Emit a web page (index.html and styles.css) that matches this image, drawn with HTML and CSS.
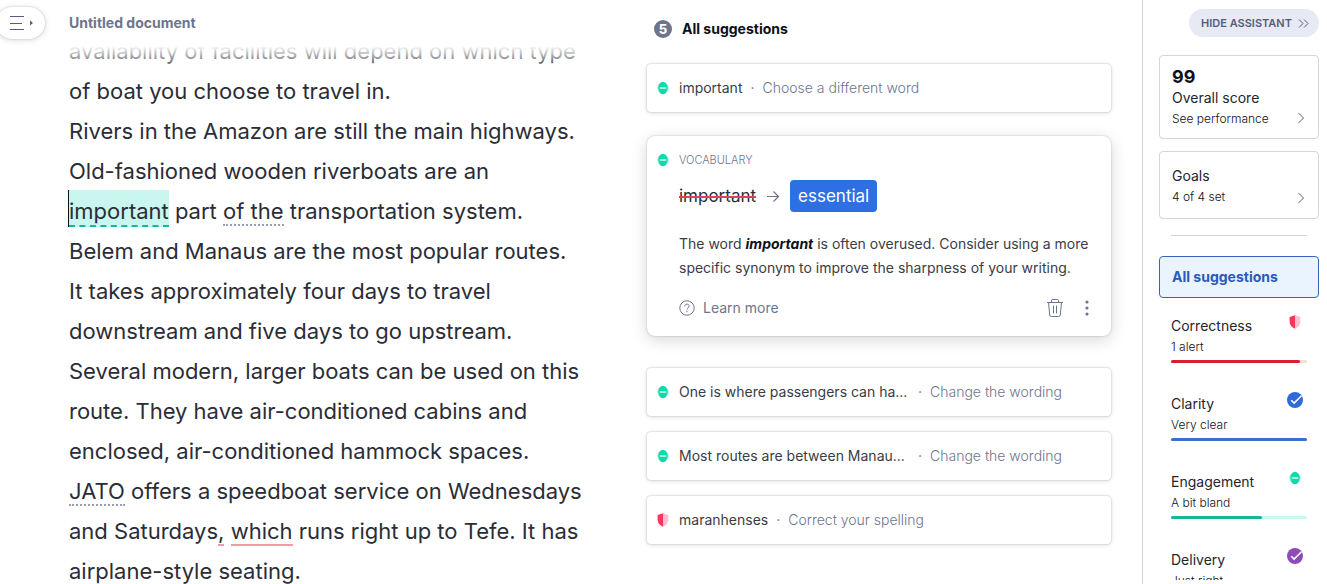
FILE: index.html
```html
<!DOCTYPE html>
<html lang="en">
<head>
  <meta charset="UTF-8" />
  <meta name="viewport" content="width=device-width, initial-scale=1.0"/>
  <title>Untitled document</title>
  <link rel="stylesheet" href="styles.css">
</head>
<body>
  <!-- icons shared by the cards and the sidebar -->
  <svg class="sprite" aria-hidden="true">
    <symbol id="icon-engage" viewBox="0 0 12 14">
      <ellipse cx="6" cy="7" rx="6" ry="5" fill="#b5f5e6"/>
      <ellipse cx="6" cy="7" rx="4.7" ry="6.3" fill="#0edbab"/>
      <path d="M2 7l1.600-1h4.800l1.600 1-1.600 1H3.600z" fill="#a5f3df"/>
    </symbol>
    <symbol id="icon-shield" viewBox="0 0 12 14">
      <path d="M6 .3 L.6 2v4.500C.6 10 2.800 12.500 6 13.700z" fill="#f8365e"/>
      <path d="M6 .3 L11.300 2v4.500c0 3.500-2.100 6-5.300 7.200z" fill="#fcc0cc"/>
    </symbol>
    <symbol id="icon-check" viewBox="0 0 16 16">
      <circle cx="8" cy="8" r="8" fill="currentColor"/>
      <path d="M4.300 8.200l2.800 2.900 7.400-7.300" fill="none" stroke="#fff" stroke-width="1.600"/>
    </symbol>
    <symbol id="icon-chevron" viewBox="0 0 8 12">
      <path d="M1.500 1l5 5-5 5" fill="none" stroke="currentColor"/>
    </symbol>
  </svg>

  <div class="app">
    <main class="editor">
      <button class="menu-btn" aria-label="Open menu">
        <svg width="32" height="16" viewBox="0 0 32 16">
          <path d="M1 1.500h14M1 8.500h12M1 14.500h14" stroke="#585d77" fill="none"/>
          <path d="M21 5.500l3 2.500-3 2.500z" fill="#585d77"/>
        </svg>
      </button>
      <header class="doc-header">
        <h1>Untitled document</h1>
      </header>
      <div class="doc-text">
        <p>availability of facilities will depend on which type of boat you choose to travel in.</p>
        <p>Rivers in the Amazon are still the main highways. Old-fashioned wooden riverboats are an <span class="active-word">important</span> part <span class="hint">of the</span> transportation system. Belem and Manaus are the most popular routes. It takes approximately four days to travel downstream and five days to go upstream.</p>
        <p>Several modern, larger boats can be used on this route. They have air-conditioned cabins and enclosed, air-conditioned hammock spaces.</p>
        <p><span class="hint">JATO</span> offers a speedboat service on Wednesdays and Saturdays<span class="error">,</span> <span class="error">which</span> runs right up to Tefe. It has airplane-style seating.</p>
      </div>
    </main>

    <section class="suggestions">
      <h2><span class="count">5</span>All suggestions</h2>

      <button class="card">
        <svg class="mark"><use href="#icon-engage"/></svg>
        <span class="snippet">important</span><span class="dot">·</span><span class="action">Choose a different word</span>
      </button>

      <article class="card-open">
        <div class="category">
          <svg class="mark"><use href="#icon-engage"/></svg>
          <span>VOCABULARY</span>
        </div>
        <div class="replace">
          <del>important</del>
          <svg width="14" height="12" viewBox="0 0 14 12">
            <path d="M1 6.500h11.500M7.500 1.500l5 5-5 5" fill="none" stroke="#6d758d" stroke-width="1.200"/>
          </svg>
          <button class="replacement">essential</button>
        </div>
        <p>The word <b>important</b> is often overused. Consider using a more specific synonym to improve the sharpness of your writing.</p>
        <div class="card-footer">
          <a href="#" class="learn">
            <svg width="16" height="16" viewBox="0 0 16 16" fill="none" stroke="#6d758d">
              <circle cx="8" cy="8" r="7.200"/>
              <path d="M5.800 6.300c0-3 4.500-2.800 4.400-.1 0 1.600-2.200 1.600-2.200 3.300"/>
              <path d="M8 10.900v1.300"/>
            </svg>
            Learn more
          </a>
          <button class="icon-btn" aria-label="Dismiss">
            <svg width="18" height="20" viewBox="0 0 18 20" fill="none" stroke="#6d758d">
              <path d="M1 4.500h16M5.500 4.500v-2q0-1 1-1h5q1 0 1 1v2M2.500 4.500l1.200 12.500q.2 1.500 1.700 1.500h7.200q1.500 0 1.700-1.500l1.200-12.500M7.500 7.500v8M10.500 7.500v8"/>
            </svg>
          </button>
          <button class="icon-btn" aria-label="More options">
            <svg width="4" height="16" viewBox="0 0 4 16" fill="#6d758d">
              <circle cx="2" cy="2" r="1.600"/>
              <circle cx="2" cy="8" r="1.600"/>
              <circle cx="2" cy="14" r="1.600"/>
            </svg>
          </button>
        </div>
      </article>

      <button class="card">
        <svg class="mark"><use href="#icon-engage"/></svg>
        <span class="snippet long">One is where passengers can ha...</span><span class="dot">·</span><span class="action">Change the wording</span>
      </button>
      <button class="card">
        <svg class="mark"><use href="#icon-engage"/></svg>
        <span class="snippet long">Most routes are between Manau...</span><span class="dot">·</span><span class="action">Change the wording</span>
      </button>
      <button class="card">
        <svg class="mark"><use href="#icon-shield"/></svg>
        <span class="snippet">maranhenses</span><span class="dot">·</span><span class="action">Correct your spelling</span>
      </button>
    </section>

    <aside class="sidebar">
      <button class="hide-btn">HIDE ASSISTANT
        <svg width="11" height="9" viewBox="0 0 11 9"><path d="M1 .5l4 4-4 4M6 .5l4 4-4 4" fill="none" stroke="#585d77"/></svg>
      </button>
      <button class="panel">
        <strong>99</strong>
        <span class="title">Overall score</span>
        <span class="sub">See performance</span>
        <svg class="chevron"><use href="#icon-chevron"/></svg>
      </button>
      <button class="panel goals">
        <span class="title">Goals</span>
        <span class="sub">4 of 4 set</span>
        <svg class="chevron"><use href="#icon-chevron"/></svg>
      </button>
      <hr>
      <button class="filter">All suggestions</button>

      <div class="metrics">
        <button class="metric red">
          <span class="title">Correctness</span>
          <span class="sub">1 alert</span>
          <svg class="mark"><use href="#icon-shield"/></svg>
          <span class="bar"><span style="width: 95%"></span></span>
        </button>
        <button class="metric blue">
          <span class="title">Clarity</span>
          <span class="sub">Very clear</span>
          <svg class="check"><use href="#icon-check"/></svg>
          <span class="bar"><span style="width: 100%"></span></span>
        </button>
        <button class="metric green">
          <span class="title">Engagement</span>
          <span class="sub">A bit bland</span>
          <svg class="mark"><use href="#icon-engage"/></svg>
          <span class="bar"><span style="width: 67%"></span></span>
        </button>
        <button class="metric purple">
          <span class="title">Delivery</span>
          <span class="sub">Just right</span>
          <svg class="check"><use href="#icon-check"/></svg>
          <span class="bar"><span style="width: 100%"></span></span>
        </button>
      </div>
    </aside>
  </div>
</body>
</html>
```
FILE: styles.css
```css
* {
  box-sizing: border-box;
}
body {
  margin: 0;
  font-family: Inter, "Liberation Sans", sans-serif;
  font-size: 14px;
  color: #0e101a;
  background: #fff;
}
h1, h2, p {
  margin: 0;
}
button {
  font: inherit;
  color: inherit;
  text-align: left;
  background: none;
  border: none;
  padding: 0;
  cursor: pointer;
}
.sprite {
  display: none;
}
.app {
  display: flex;
  height: 100vh;
  overflow: hidden;
}

/* document */
.editor {
  flex: 1;
  min-width: 0;
  position: relative;
  padding: 0 64px 0 69px;
}
.menu-btn {
  position: absolute;
  left: -4px;
  top: 7px;
  width: 49px;
  height: 32px;
  padding-left: 13px;
  display: flex;
  align-items: center;
  border-radius: 16px;
  background: #fff;
  box-shadow: 0 0 2px rgba(0,0,0,0.2), 0 1px 6px rgba(0,0,0,0.15);
}
.doc-header {
  position: relative;
  height: 46px;
  background: #fff;
}
.doc-header::after {
  content: "";
  position: absolute;
  top: 46px;
  left: 0;
  right: 0;
  height: 24px;
  background: linear-gradient(#fff, rgba(255,255,255,0));
}
.doc-header h1 {
  font-size: 14px;
  font-weight: 700;
  line-height: 46px;
  color: #6d758d;
}
.doc-header, .menu-btn {
  z-index: 1;
}
.doc-text {
  margin-top: -15px;
  font-size: 22px;
  line-height: 40px;
  color: #2b2d36;
}
.active-word {
  padding: 8px 0 1px;
  background: #c9f6ee;
  border-bottom: 2px dashed #15b796;
  box-shadow: -1px 0 #0e101a;
}
.hint {
  border-bottom: 2px dotted #9aa0b2;
}
.error {
  border-bottom: 2px solid #f29aa6;
}

/* suggestion cards */
.suggestions {
  width: 464px;
  margin-right: 31px;
}
.suggestions h2 {
  display: flex;
  align-items: center;
  gap: 10px;
  margin: 19px 0 25px 7px;
  font-size: 14px;
  font-weight: 700;
  line-height: 20px;
}
.count {
  width: 18px;
  height: 18px;
  border-radius: 50%;
  background: #6d758d;
  color: #fff;
  font-size: 13px;
  font-weight: 800;
  line-height: 18px;
  text-align: center;
}
.card {
  display: flex;
  align-items: center;
  width: 100%;
  height: 48px;
  padding: 0 10px;
  margin-bottom: 16px;
  border-radius: 4px;
  background: #fff;
  color: #3a3c46;
  line-height: 20px;
  box-shadow: 0 0 2px rgba(0,0,0,0.25), 0 1px 5px rgba(0,0,0,0.12);
}
.mark {
  flex: none;
  width: 12px;
  height: 14px;
}
.snippet {
  margin-left: 10px;
  white-space: nowrap;
}
.long {
  width: 231px;
}
.dot {
  margin: 0 8px;
}
.dot, .action {
  color: #6d758d;
}
.action {
  font-weight: 300;
}
.card-open {
  margin: 24px 0 32px;
  padding: 14px 16px 16px 32px;
  border-radius: 8px;
  background: #fff;
  box-shadow: 0 0 2px rgba(0,0,0,0.25), 0 4px 16px rgba(0,0,0,0.16);
}
.category {
  display: flex;
  align-items: center;
  gap: 10px;
  margin-left: -22px;
  font-size: 11px;
  font-weight: 300;
  line-height: 20px;
  color: #6d758d;
}
.replace {
  display: flex;
  align-items: center;
  gap: 10px;
  margin: 10px 0 20px;
  font-size: 17px;
}
.replace del {
  color: #2b2d36;
  text-decoration: line-through 2px #e0405e;
}
.replacement {
  height: 32px;
  padding: 0 8px;
  border-radius: 4px;
  background: #2f6fe4;
  color: #fff;
}
.card-open p {
  line-height: 24px;
  color: #3a3c46;
}
.card-open b {
  font-style: italic;
  font-weight: 700;
  color: #0e101a;
}
.card-footer {
  display: flex;
  align-items: center;
  gap: 21px;
  height: 24px;
  margin-top: 16px;
  padding-right: 6px;
}
.learn {
  display: flex;
  align-items: center;
  gap: 8px;
  margin-right: auto;
  color: #6d758d;
  line-height: 20px;
  text-decoration: none;
}
.icon-btn {
  display: flex;
}

/* sidebar */
.sidebar {
  display: flex;
  flex-direction: column;
  width: 185px;
  padding: 9px 8px 4px 16px;
  border-left: 1px solid #d5d6dc;
}
.hide-btn {
  display: flex;
  align-items: center;
  align-self: flex-end;
  gap: 6px;
  flex: none;
  height: 28px;
  padding: 0 10px 0 12px;
  margin-bottom: 18px;
  border-radius: 14px;
  background: #e7e9f5;
  color: #585d77;
  font-size: 11px;
  font-weight: 600;
  white-space: nowrap;
}
.panel {
  flex: none;
  position: relative;
  padding: 10px 12px 8px;
  margin-bottom: 12px;
  border: 1px solid #d5d6dc;
  border-radius: 4px;
}
.goals {
  padding: 14px 12px 10px;
  margin-bottom: 16px;
}
.panel strong {
  display: block;
  font-size: 18px;
  line-height: 22px;
}
.title, .sub {
  display: block;
}
.title {
  line-height: 20px;
  color: #23252e;
}
.sub {
  font-size: 12px;
  font-weight: 300;
  line-height: 22px;
}
.chevron {
  position: absolute;
  right: 13px;
  bottom: 14px;
  width: 8px;
  height: 12px;
  color: #585d77;
}
.sidebar hr {
  width: 136px;
  margin: 0 12px 20px;
  border: none;
  border-top: 1px solid #d5d6dc;
}
.filter {
  flex: none;
  height: 42px;
  padding: 0 12px;
  border: 1px solid #3763b8;
  border-radius: 4px;
  background: #eaf4ff;
  color: #2a5ab9;
  font-weight: 700;
  line-height: 20px;
}
.metrics {
  flex: 1;
  min-height: 0;
  overflow: hidden;
  padding: 18px 12px 0;
}
.metric {
  display: block;
  position: relative;
  width: 100%;
  margin-bottom: 31px;
}
.metric .mark, .metric .check {
  position: absolute;
  top: -1px;
  right: 6px;
}
.metric .check {
  top: -2px;
  right: 4px;
  width: 16px;
  height: 16px;
}
.bar {
  display: block;
  height: 3px;
  margin-top: 2px;
  border-radius: 2px;
}
.bar span {
  display: block;
  height: 3px;
  border-radius: 2px;
}
.red .bar {
  background: #fbdcdc;
}
.red .bar span {
  background: #d91f2b;
}
.blue .check {
  color: #2f6bd8;
}
.blue .bar span {
  background: #3a6dcd;
}
.green .bar {
  background: #c9f6ee;
}
.green .bar span {
  background: #15b796;
}
.purple .check {
  color: #8f4bb8;
}
.purple .bar span {
  background: #8f4bb8;
}
```
